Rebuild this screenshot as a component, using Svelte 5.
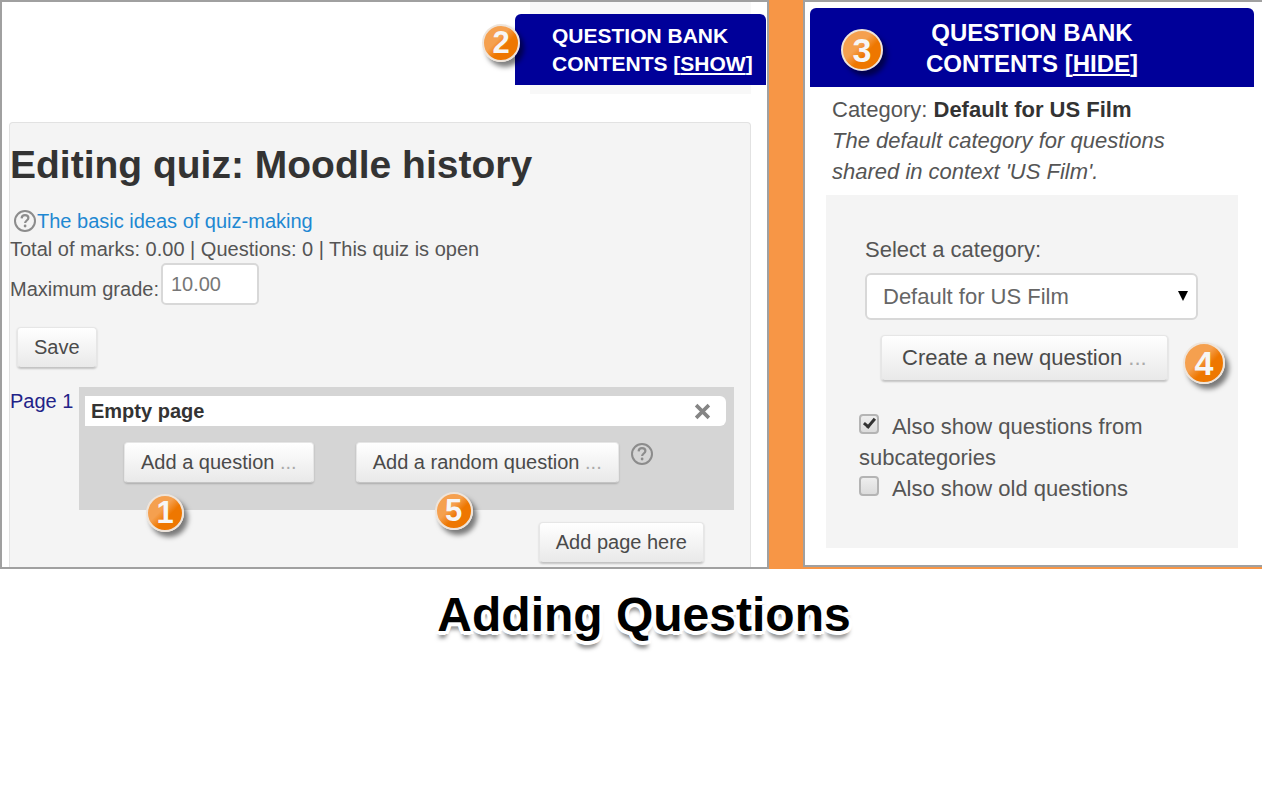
<script>
    let maxGrade = "10.00";
    let category = "us-film";
    let showSubcategories = true;
    let showOld = false;
</script>

{#snippet badge(number)}
    <span class="badge badge-{number}">{number}</span>
{/snippet}

{#snippet helpIcon()}
    <svg class="help" viewBox="0 0 24 24" aria-hidden="true">
        <circle cx="12" cy="12" r="10" fill="none" stroke="#8c8c8c" stroke-width="2" />
        <path
            d="M8.6 9.4C8.8 7.2 10.1 6.2 12 6.2c2 0 3.4 1.1 3.4 2.8 0 2.4-3.3 2.6-3.3 5"
            fill="none"
            stroke="#8c8c8c"
            stroke-width="2.2"
        />
        <circle cx="12.1" cy="17" r="1.4" fill="#8c8c8c" />
    </svg>
{/snippet}

<main>
    <div class="stage">
        <section class="panel quiz">
            <div class="tab-backdrop">
                <h2 class="bank-title">
                    QUESTION BANK<br />CONTENTS [<a href="#show">SHOW</a>]
                    {@render badge(2)}
                </h2>
            </div>

            <div class="editor">
                <h1>Editing quiz: Moodle history</h1>
                <p class="help-line">
                    {@render helpIcon()}<a href="#basics">The basic ideas of quiz-making</a>
                </p>
                <p>Total of marks: 0.00 | Questions: 0 | This quiz is open</p>

                <div class="grade">
                    <label for="maxGrade">Maximum grade:</label>
                    <input type="text" id="maxGrade" bind:value={maxGrade} />
                </div>
                <button type="button" class="btn save">Save</button>

                <div class="page-row">
                    <span class="page-name">Page 1</span>
                    <div class="slot">
                        <div class="slot-head">
                            <strong>Empty page</strong>
                            <button type="button" class="remove" aria-label="Remove page">
                                <svg viewBox="0 0 16 16" aria-hidden="true">
                                    <path d="M2 2l12 12M14 2L2 14" stroke="#858585" stroke-width="3.4" />
                                </svg>
                            </button>
                        </div>
                        <div class="slot-actions">
                            <div class="anchor">
                                <button type="button" class="btn">Add a question <span class="dots">...</span></button>
                                {@render badge(1)}
                            </div>
                            <div class="anchor">
                                <button type="button" class="btn">Add a random question <span class="dots">...</span></button>
                                {@render badge(5)}
                            </div>
                            {@render helpIcon()}
                        </div>
                    </div>
                </div>

                <div class="add-page">
                    <button type="button" class="btn">Add page here</button>
                </div>
            </div>
        </section>

        <section class="panel bank">
            <h2 class="bank-title">
                QUESTION BANK<br />CONTENTS [<a href="#hide">HIDE</a>]
                {@render badge(3)}
            </h2>
            <div class="category-info">
                <p>Category: <strong>Default for US Film</strong></p>
                <p><em>The default category for questions<br />shared in context 'US Film'.</em></p>
            </div>

            <div class="filters">
                <label class="select-label" for="category">Select a category:</label>
                <div class="select-wrap">
                    <select id="category" bind:value={category}>
                        <option value="us-film">Default for US Film</option>
                    </select>
                    <svg viewBox="0 0 10 10" aria-hidden="true">
                        <path d="M0 0h10L5 10z" fill="#000" />
                    </svg>
                </div>
                <div class="anchor create">
                    <button type="button" class="btn">Create a new question <span class="dots">...</span></button>
                    {@render badge(4)}
                </div>
                <div class="checks">
                    <label>
                        <input type="checkbox" bind:checked={showSubcategories} />
                        Also show questions from<br />subcategories
                    </label>
                    <label>
                        <input type="checkbox" bind:checked={showOld} />
                        Also show old questions
                    </label>
                </div>
            </div>
        </section>
    </div>

    <h1 class="caption">Adding Questions</h1>
</main>

<style>
    :global(body) {
        background: white;
    }

    main {
        font-family: "Liberation Sans", Arial, sans-serif;
        font-size: 20px;
        line-height: 28px;
        color: #555;
    }

    h1,
    h2,
    p {
        margin: 0;
    }

    button,
    input,
    select {
        font-family: inherit;
        font-size: inherit;
        box-sizing: border-box;
    }

    .stage {
        display: grid;
        grid-template-columns: 769fr 459fr;
        gap: 34px;
        background: #f79646;
    }

    .panel {
        background: white;
        border: 2px solid #a0a0a0;
    }

    .quiz {
        display: flex;
        flex-direction: column;
    }

    .bank-title {
        position: relative;
        background: #000099;
        color: white;
        text-align: center;
        font-weight: bold;
    }

    .bank-title a {
        color: white;
    }

    /* collapsed question bank tab */
    .tab-backdrop {
        align-self: flex-end;
        width: 221px;
        margin-right: 16px;
        padding: 12px 0 9px;
        background: #f8f8f8;
    }

    .tab-backdrop .bank-title {
        margin: 0 -15px;
        padding: 8px 12px 7px 37px;
        border-radius: 6px 6px 0 0;
        font-size: 21px;
        text-align: left;
        white-space: nowrap;
    }

    .editor {
        flex: 1;
        margin: 28px 16px 0 7px;
        border: 1px solid #e2e2e2;
        border-bottom: none;
        border-radius: 4px 4px 0 0;
        background: #f4f4f4;
    }

    .editor h1 {
        padding: 22px 0;
        font-size: 39px;
        line-height: 40px;
        color: #333;
    }

    .help {
        width: 24px;
        height: 24px;
        flex: none;
    }

    .help-line {
        display: flex;
        align-items: center;
        padding-left: 3px;
    }

    .help-line a {
        color: #1e88d2;
        text-decoration: none;
    }

    .grade {
        display: flex;
        align-items: flex-end;
        gap: 2px;
    }

    .grade label {
        padding-bottom: 2px;
    }

    .grade input {
        width: 98px;
        height: 42px;
        padding: 0 8px;
        border: 2px solid #d8d8d8;
        border-radius: 5px;
        background: white;
        color: #777;
    }

    .btn {
        height: 41px;
        padding: 0 16px;
        border: 1px solid #e6e6e6;
        border-bottom-color: #c4c4c4;
        border-radius: 4px;
        background: linear-gradient(#fff, #e9e9e9);
        box-shadow: 0 1px 2px rgba(0, 0, 0, 0.2);
        color: #4a4a4a;
        white-space: nowrap;
        cursor: pointer;
    }

    .dots {
        color: #aaa;
    }

    .save {
        display: block;
        margin: 22px 0 19px 7px;
    }

    .page-row {
        display: flex;
        margin-right: 16px;
    }

    .page-name {
        flex: none;
        width: 69px;
        color: #222288;
    }

    .slot {
        flex: 1;
        padding: 9px 8px 27px 6px;
        background: #d5d5d5;
    }

    .slot-head {
        display: flex;
        align-items: center;
        justify-content: space-between;
        height: 30px;
        padding: 0 15px 0 6px;
        border-radius: 0 6px 6px 0;
        background: white;
        color: #333;
    }

    .remove {
        display: flex;
        padding: 0;
        border: none;
        background: none;
        cursor: pointer;
    }

    .remove svg {
        width: 17px;
        height: 17px;
    }

    .slot-actions {
        display: flex;
        padding: 16px 0 0 39px;
    }

    .slot-actions .anchor + .anchor {
        margin: 0 11px 0 42px;
    }

    .anchor {
        position: relative;
    }

    .add-page {
        display: flex;
        justify-content: flex-end;
        padding: 12px 46px 4px;
    }

    /* expanded question bank */
    .bank {
        margin-bottom: 2px;
        border-right: none;
        font-size: 22px;
        line-height: 31px;
    }

    .bank > .bank-title {
        margin: 6px 8px 0 5px;
        padding: 9px 0 8px;
        border-radius: 6px 6px 0 0;
        font-size: 24px;
    }

    .category-info {
        margin: 7px 0 8px 27px;
    }

    .category-info strong {
        color: #333;
    }

    .filters {
        margin: 0 24px 16px 21px;
        padding: 39px 33px 44px;
        background: #f4f4f4;
    }

    .select-label {
        display: block;
        padding: 0 0 8px 6px;
    }

    .select-wrap {
        position: relative;
        margin: 0 7px 0 6px;
    }

    .select-wrap select {
        display: block;
        appearance: none;
        width: 100%;
        height: 47px;
        padding: 0 16px;
        border: 2px solid #d8d8d8;
        border-radius: 6px;
        background: white;
        color: #666;
    }

    .select-wrap svg {
        position: absolute;
        top: 18px;
        right: 10px;
        width: 10px;
        height: 10px;
        pointer-events: none;
    }

    .create {
        width: fit-content;
        margin: 15px 0 30px 22px;
    }

    .create .btn {
        height: 46px;
        padding: 0 20px;
    }

    .checks label {
        display: block;
    }

    .checks input {
        appearance: none;
        position: relative;
        width: 20px;
        height: 20px;
        margin: 0 8px 0 0;
        border: 2px solid #b4b4b4;
        border-radius: 4px;
        background: linear-gradient(#eee, #dcdcdc);
    }

    .checks input:checked::after {
        content: "";
        position: absolute;
        top: 0;
        left: 5px;
        width: 4px;
        height: 9px;
        border: solid #333;
        border-width: 0 3px 3px 0;
        transform: rotate(40deg);
    }

    /* numbered callouts */
    .badge {
        position: absolute;
        box-sizing: border-box;
        width: 38px;
        height: 38px;
        border: 2px solid #eee4da;
        border-radius: 50%;
        background: linear-gradient(135deg, #f5a04f 40%, #ee7700 60%);
        box-shadow: 4px 5px 5px rgba(0, 0, 0, 0.5);
        color: #f6f6f6;
        font-size: 31px;
        font-weight: bold;
        line-height: 34px;
        text-align: center;
    }

    .badge-1 {
        left: 22px;
        top: 52px;
    }

    .badge-2 {
        left: -33px;
        top: 10px;
    }

    .badge-3,
    .badge-4 {
        width: 42px;
        height: 42px;
        font-size: 34px;
        line-height: 38px;
    }

    .badge-3 {
        left: 31px;
        top: 21px;
    }

    .badge-4 {
        left: 302px;
        top: 7px;
    }

    .badge-5 {
        left: 79px;
        top: 50px;
    }

    .caption {
        padding: 18px 0 20px 26px;
        color: black;
        font-size: 48px;
        line-height: 56px;
        text-align: center;
        text-shadow:
            4px 0 white,
            -4px 0 white,
            0 4px white,
            0 -4px white,
            3px 3px white,
            -3px 3px white,
            0 7px 4px rgba(0, 0, 0, 0.5);
    }
</style>
